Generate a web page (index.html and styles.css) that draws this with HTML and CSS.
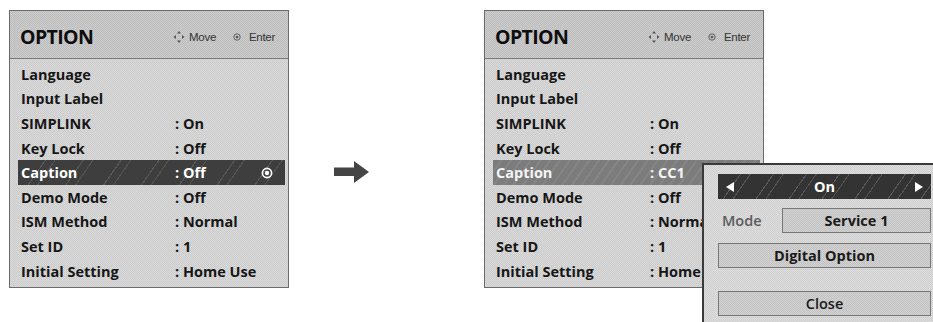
FILE: index.html
```html
<!DOCTYPE html>
<html lang="en">
<head>
    <meta charset="UTF-8">
    <meta name="viewport" content="width=device-width, initial-scale=1.0">
    <title>Option Menu</title>
    <link rel="stylesheet" href="styles.css">
</head>
<body>
    <div class="scene">
        <!-- Before: Caption row selected -->
        <div class="menu">
            <div class="menu-head">
                <span class="menu-title">OPTION</span>
                <span class="hint">
                    <svg class="move-icon" width="12" height="14" viewBox="0 0 12 14">
                        <path d="M6 1 L8 3.5 H4 Z M6 13 L8 10.5 H4 Z M0.5 7 L3 5 V9 Z M11.5 7 L9 5 V9 Z" fill="#555"/>
                    </svg>
                    Move
                    <svg class="enter-icon" width="8" height="8" viewBox="0 0 8 8">
                        <circle cx="4" cy="4" r="3.2" fill="none" stroke="#555" stroke-width="0.9"/>
                        <circle cx="4" cy="4" r="1.3" fill="#555"/>
                    </svg>
                    Enter
                </span>
            </div>
            <ul class="menu-list">
                <li><span class="label">Language</span></li>
                <li><span class="label">Input Label</span></li>
                <li><span class="label">SIMPLINK</span><span class="value">: On</span></li>
                <li><span class="label">Key Lock</span><span class="value">: Off</span></li>
                <li class="selected">
                    <span class="label">Caption</span><span class="value">: Off</span>
                    <svg class="ok-icon" width="12" height="12" viewBox="0 0 12 12">
                        <circle cx="6" cy="6" r="4.6" fill="none" stroke="#fff" stroke-width="1.6"/>
                        <circle cx="6" cy="6" r="2.2" fill="#fff"/>
                    </svg>
                </li>
                <li><span class="label">Demo Mode</span><span class="value">: Off</span></li>
                <li><span class="label">ISM Method</span><span class="value">: Normal</span></li>
                <li><span class="label">Set ID</span><span class="value">: 1</span></li>
                <li><span class="label">Initial Setting</span><span class="value">: Home Use</span></li>
            </ul>
        </div>

        <div class="step-arrow">
            <svg width="36" height="24" viewBox="0 0 36 24">
                <polygon points="0,7.5 20,7.5 20,1 35,12 20,23 20,16 0,16" fill="#444"/>
            </svg>
        </div>

        <!-- After: Caption popup open -->
        <div class="menu">
            <div class="menu-head">
                <span class="menu-title">OPTION</span>
                <span class="hint">
                    <svg class="move-icon" width="12" height="14" viewBox="0 0 12 14">
                        <path d="M6 1 L8 3.5 H4 Z M6 13 L8 10.5 H4 Z M0.5 7 L3 5 V9 Z M11.5 7 L9 5 V9 Z" fill="#555"/>
                    </svg>
                    Move
                    <svg class="enter-icon" width="8" height="8" viewBox="0 0 8 8">
                        <circle cx="4" cy="4" r="3.2" fill="none" stroke="#555" stroke-width="0.9"/>
                        <circle cx="4" cy="4" r="1.3" fill="#555"/>
                    </svg>
                    Enter
                </span>
            </div>
            <ul class="menu-list">
                <li><span class="label">Language</span></li>
                <li><span class="label">Input Label</span></li>
                <li><span class="label">SIMPLINK</span><span class="value">: On</span></li>
                <li><span class="label">Key Lock</span><span class="value">: Off</span></li>
                <li class="active"><span class="label">Caption</span><span class="value">: CC1</span></li>
                <li><span class="label">Demo Mode</span><span class="value">: Off</span></li>
                <li><span class="label">ISM Method</span><span class="value">: Normal</span></li>
                <li><span class="label">Set ID</span><span class="value">: 1</span></li>
                <li><span class="label">Initial Setting</span><span class="value">: Home Use</span></li>
            </ul>

            <div class="popup">
                <div class="switch">
                    <span class="tri tri-left"></span>
                    <span>On</span>
                    <span class="tri tri-right"></span>
                </div>
                <div class="mode-row">
                    <span class="mode-label">Mode</span>
                    <span class="box mode-box">Service 1</span>
                </div>
                <div class="box">Digital Option</div>
                <div class="box close-box">Close</div>
            </div>
        </div>
    </div>
</body>
</html>
```

FILE: styles.css
```css
body {
    margin: 0;
    background: #fff;
    font-family: "Open Sans", "Noto Sans", sans-serif;
    color: #161616;
}

.scene {
    display: flex;
    align-items: flex-start;
    width: 933px;
    height: 322px;
    padding: 10px 0 0 9px;
    box-sizing: border-box;
    overflow: hidden;
}

.menu {
    position: relative;
    flex-shrink: 0;
    width: 280px;
    height: 278px;
    border: 1px solid #6a6a6a;
    background: repeating-conic-gradient(#cbcbcb 0 25%, #dadada 0 50%) 0 0 / 2px 2px;
    box-sizing: border-box;
}

.menu-head {
    display: flex;
    align-items: center;
    height: 48px;
    padding: 0 13px 0 10px;
    background: repeating-conic-gradient(#bcbcbc 0 25%, #cdcdcd 0 50%) 0 0 / 2px 2px;
    border-bottom: 1px solid #7a7a7a;
    box-sizing: border-box;
}

.menu-title {
    font-size: 19.5px;
    font-weight: 700;
    letter-spacing: -0.6px;
    color: #0e0e0e;
    margin-top: 4px;
}

.hint {
    display: flex;
    align-items: center;
    margin-left: auto;
    margin-top: 5px;
    font-family: "Liberation Sans", Arial, sans-serif;
    font-size: 11.5px;
    color: #333;
    letter-spacing: -0.3px;
}

.move-icon {
    margin-right: 4px;
}

.enter-icon {
    margin: 0 8px 0 17px;
}

.menu-list {
    list-style: none;
    margin: 0;
    padding: 3px 0 0 8px;
}

.menu-list li {
    display: flex;
    align-items: center;
    height: 24.6px;
    padding-left: 3px;
    margin-right: 3px;
    font-size: 14.5px;
    font-weight: 700;
    white-space: nowrap;
}

.label {
    width: 154px;
}

.selected {
    color: #fff;
    background: repeating-linear-gradient(125deg, #3e3e3e 0 22px, #5a5a5a 22px 23px, #3e3e3e 23px 30px, #555 30px 31px);
}

.active {
    color: #f4f4f4;
    background: repeating-linear-gradient(125deg, #7c7c7c 0 6px, #858585 6px 8px);
}

.ok-icon {
    margin-left: auto;
    margin-right: 12px;
}

.step-arrow {
    flex-shrink: 0;
    width: 195px;
    padding: 150px 0 0 45px;
    box-sizing: border-box;
}

/* popup over the right-hand menu */
.popup {
    position: absolute;
    left: 217px;
    top: 152px;
    width: 240px;
    height: 165px;
    padding: 9px 0 0 14px;
    background: repeating-conic-gradient(#cfcfcf 0 25%, #dedede 0 50%) 0 0 / 2px 2px;
    border-left: 2px solid #3a3a3a;
    border-top: 2px solid #3a3a3a;
    box-sizing: border-box;
}

.switch {
    display: flex;
    align-items: center;
    justify-content: space-between;
    width: 213px;
    height: 25px;
    padding: 0 8px;
    box-sizing: border-box;
    color: #fff;
    font-size: 14.5px;
    font-weight: 700;
    background: repeating-linear-gradient(125deg, #333 0 18px, #5a5a5a 18px 19px, #333 19px 26px, #555 26px 27px);
}

.tri {
    width: 0;
    height: 0;
    border-top: 5px solid transparent;
    border-bottom: 5px solid transparent;
}

.tri-left {
    border-right: 8px solid #fff;
}

.tri-right {
    border-left: 8px solid #fff;
}

.mode-row {
    display: flex;
    align-items: center;
    margin-top: 9px;
}

.mode-label {
    width: 64px;
    padding-left: 4px;
    box-sizing: border-box;
    font-size: 14.5px;
    font-weight: 600;
    color: #5c5c5c;
}

.box {
    display: flex;
    align-items: center;
    justify-content: center;
    width: 213px;
    height: 25px;
    border: 1px solid #777;
    background: repeating-conic-gradient(#c2c2c2 0 25%, #d2d2d2 0 50%) 0 0 / 2px 2px;
    box-sizing: border-box;
    font-size: 14.5px;
    font-weight: 700;
    color: #1a1a1a;
}

.mode-box {
    width: 149px;
}

.mode-row + .box {
    margin-top: 10px;
}

.close-box {
    margin-top: 23px;
    font-weight: 600;
}
```
